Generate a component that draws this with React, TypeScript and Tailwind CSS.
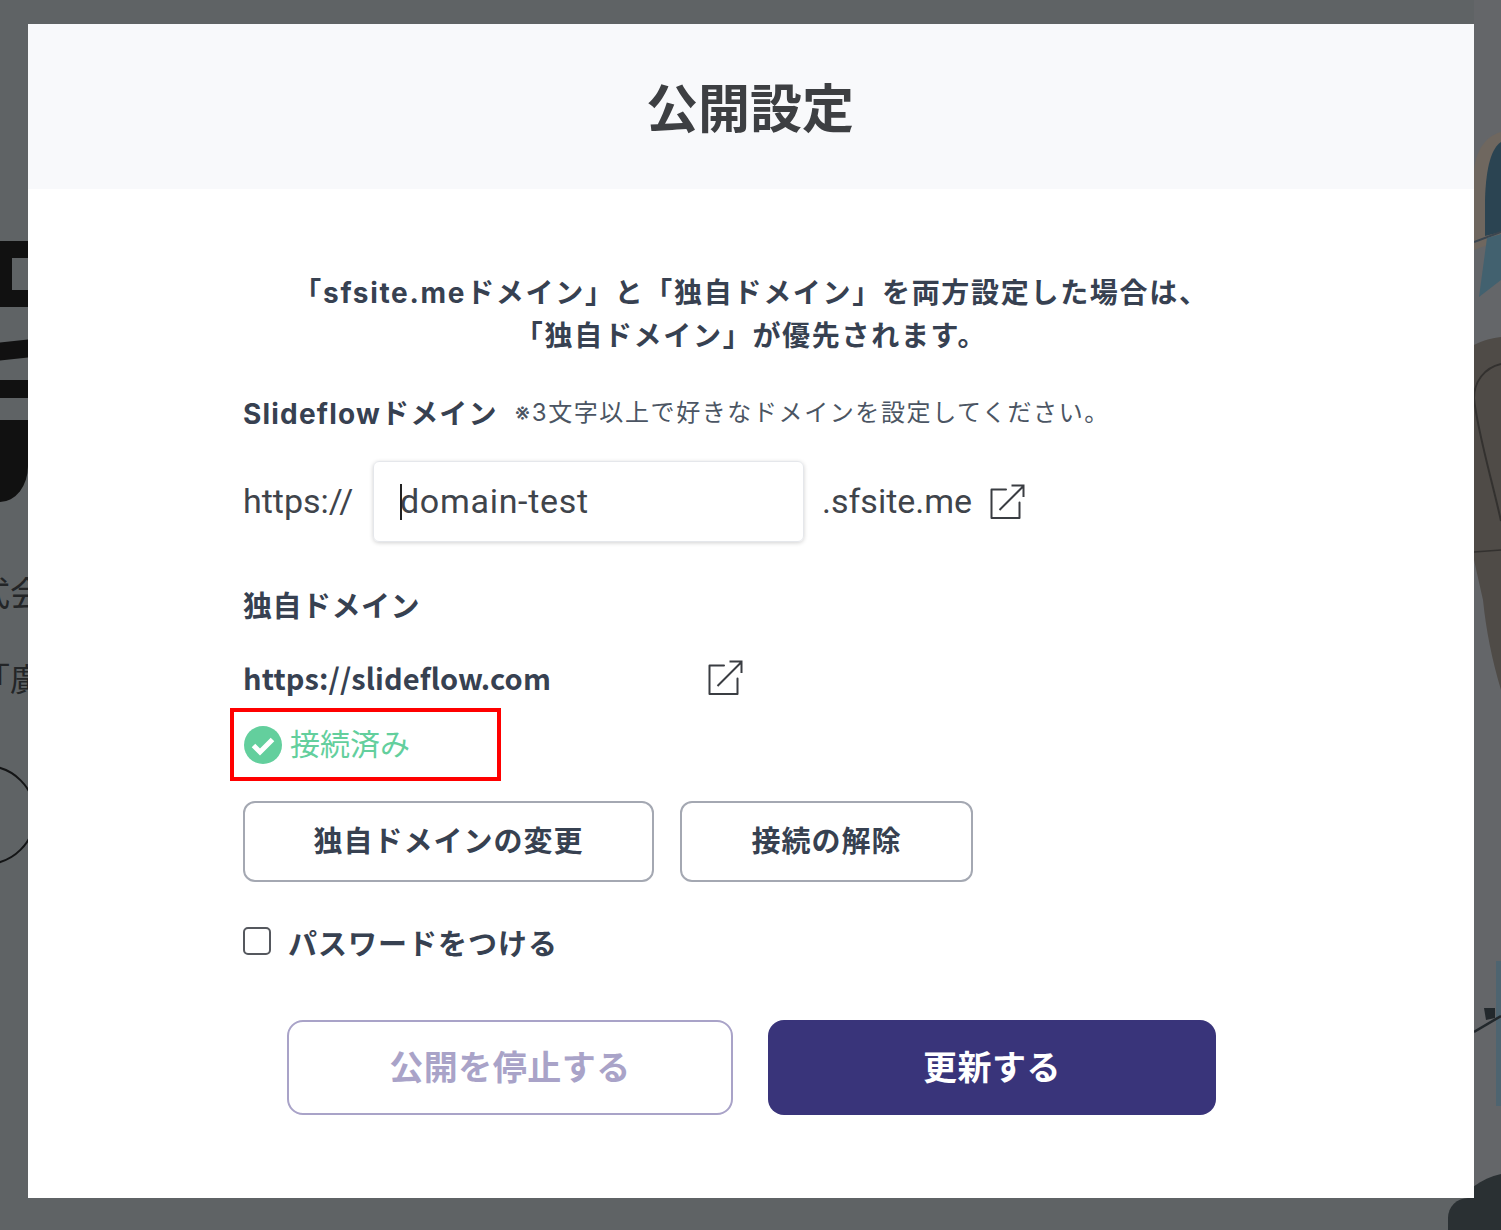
const inter = "font-['Inter','Noto_Sans_CJK_JP',sans-serif]";
const noto = "font-['Noto_Sans_CJK_JP',sans-serif]";

function ExternalIcon() {
  return (
    <svg width="36" height="36" viewBox="0 0 36 36" fill="none" stroke="#3a3d42" strokeWidth="2" className="shrink-0">
      <path d="M17 5.5H2.5V34H30.5V18.5" strokeLinejoin="round" strokeLinecap="round" />
      <path d="M10.5 26L34 2.5M22.5 1.5H34.5V13" />
    </svg>
  );
}

function Backdrop() {
  return (
    <div className="absolute inset-0 overflow-hidden bg-[#5f6365]">
      <div className="absolute left-0 top-[241px] h-[66px] w-[28px] border-y-[17px] border-l-[12px] border-[#111111]" />
      <div className="absolute left-0 top-[341px] h-[18px] w-[28px] -skew-y-6 bg-[#111111]" />
      <div className="absolute left-0 top-[380px] h-[18px] w-[28px] bg-[#111111]" />
      <div className="absolute left-0 top-[420px] h-[82px] w-[28px] rounded-br-[28px_36px] bg-[#111111]" />
      <div className={`absolute left-[-24px] top-[572px] text-[34px] leading-10 text-[#232527] ${noto}`}>式会</div>
      <div className={`absolute left-[-22px] top-[657px] text-[32px] leading-10 text-[#232527] ${noto}`}>「廣</div>
      <div className="absolute left-[-64px] top-[765px] h-[100px] w-[100px] rounded-full border-2 border-[#141516]" />

      {/* photo behind the dialog, right edge */}
      <svg className="absolute left-[1474px] top-0" width="27" height="1230" viewBox="0 0 27 1230">
        <rect width="27" height="1230" fill="#646669" />
        <path d="M0 170C2 150 12 136 27 132V240L0 250Z" fill="#6f675f" />
        <path d="M11 200C12 165 18 148 27 142V232L11 236Z" fill="#2b4452" />
        <path d="M0 242L27 232" stroke="#3b4650" strokeWidth="2" />
        <path d="M5 297L13 238L27 234V280Z" fill="#42616f" />
        <path d="M0 345C10 340 18 338 27 337V690C18 660 12 630 9 600L0 560Z" fill="#4f4b47" />
        <path d="M27 364C10 368 0 382 0 398C3 430 18 480 27 521" fill="none" stroke="#33312f" strokeWidth="2" />
        <path d="M0 552L27 550" stroke="#33312f" strokeWidth="1.5" />
        <rect x="22" y="961" width="5" height="145" fill="#4e6470" />
        <path d="M0 1032L27 1016" stroke="#22282c" strokeWidth="2.5" />
        <path d="M10 1008H21V1018L12 1020Z" fill="#22282c" />
        <path d="M-27 1230C-20 1200 0 1180 27 1174V1230Z" fill="#2a3033" />
      </svg>
      <div className="absolute bottom-0 left-[1448px] h-[32px] w-[26px] rounded-tl-[20px] bg-[#2a3033]" />
    </div>
  );
}

export default function App() {
  return (
    <div className="relative h-[1230px] w-[1501px] overflow-hidden pl-[28px] pt-[24px]">
      <Backdrop />
      <div className={`relative flex h-[1174px] w-[1446px] flex-col bg-white ${inter}`}>
        <div className={`flex h-[165px] items-center justify-center bg-[#f8f9fb] pb-[2px] pr-[2px] text-[52px] font-bold text-[#3d3f42] ${noto}`}>
          公開設定
        </div>

        <div className="flex flex-col px-[215px] pt-[83px]">
          <p className="w-[1016px] text-center text-[28px] leading-[43px] font-bold tracking-[1.7px] text-[#374151]">
            「sfsite.meドメイン」と「独自ドメイン」を両方設定した場合は、
            <br />
            「独自ドメイン」が優先されます。
          </p>

          <div className="mt-[36px] flex h-[40px] items-center gap-[17px]">
            <span className="text-[28px] font-bold tracking-[1.2px] text-[#374151]">Slideflowドメイン</span>
            <span className="pb-[2px] text-[24px] tracking-[1.6px] text-[#4b5563]">※3文字以上で好きなドメインを設定してください。</span>
          </div>

          <div className="mt-[27px] flex h-[81px] items-center font-['Roboto',sans-serif] text-[34px] text-[#3f444b]">
            <span className="w-[130px]">https://</span>
            <div className="relative flex h-[81px] w-[431px] items-center rounded-[6px] border border-[#e5e7eb] pl-[26px] tracking-[0.7px] shadow-[0_1px_4px_rgba(0,0,0,0.18)]">
              <span className="absolute left-[26px] h-[36px] w-[2px] bg-[#222222]" />
              domain-test
            </div>
            <span className="ml-[18px] w-[167px]">.sfsite.me</span>
            <ExternalIcon />
          </div>

          <div className={`mt-[42px] h-[40px] text-[29px] leading-[40px] font-bold tracking-[0.5px] text-[#374151] ${noto}`}>独自ドメイン</div>

          <div className="mt-[34px] flex h-[40px] items-center">
            <span className={`w-[464px] text-[29px] font-bold tracking-[0.15px] text-[#374151] ${noto}`}>https://slideflow.com</span>
            <ExternalIcon />
          </div>

          <div className="ml-[-13px] mt-[10px] flex h-[73px] w-[271px] items-center gap-[8px] border-[4px] border-[#ff0000] pl-[10px]">
            <svg width="38" height="38" viewBox="0 0 38 38" className="shrink-0">
              <circle cx="19" cy="19" r="19" fill="#63cf9d" />
              <path d="M9.5 19.5L16 26L28.5 13.5" fill="none" stroke="white" strokeWidth="5" />
            </svg>
            <span className={`pb-[4px] text-[30px] text-[#63cf9d] ${noto}`}>接続済み</span>
          </div>

          <div className={`mt-[20px] flex gap-[26px] text-[29px] font-bold tracking-[1px] text-[#374151] ${noto}`}>
            <button className="h-[81px] w-[411px] rounded-[12px] border-2 border-[#a4a8b2] pb-[4px]">独自ドメインの変更</button>
            <button className="h-[81px] w-[293px] rounded-[12px] border-2 border-[#a4a8b2] pb-[4px]">接続の解除</button>
          </div>

          <label className={`mt-[41px] flex h-[40px] items-center gap-[17px] text-[29px] font-bold tracking-[1px] text-[#374151] ${noto}`}>
            <span className="mb-[4px] h-[28px] w-[28px] rounded-[5px] border-2 border-[#55585e]" />
            パスワードをつける
          </label>

          <div className={`ml-[44px] mt-[57px] flex gap-[35px] text-[34px] font-bold tracking-[0.5px] ${noto}`}>
            <button className="h-[95px] w-[446px] rounded-[16px] border-2 border-[#a9a3c8] pb-[4px] text-[#a9a3c8]">公開を停止する</button>
            <button className="h-[95px] w-[448px] rounded-[16px] bg-[#39347a] pb-[4px] text-white">更新する</button>
          </div>
        </div>
      </div>
    </div>
  );
}
